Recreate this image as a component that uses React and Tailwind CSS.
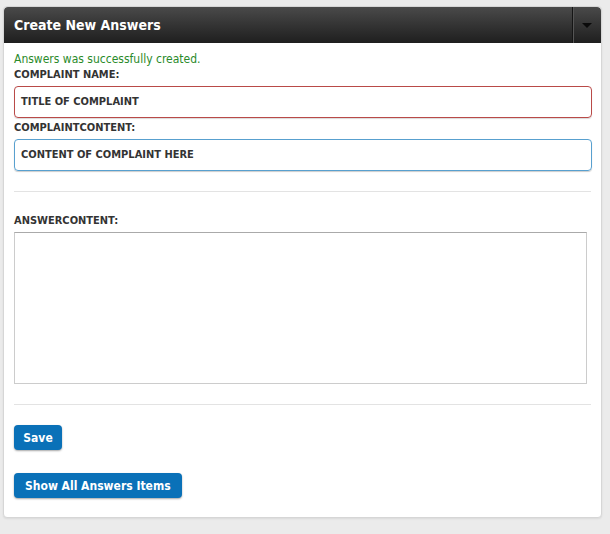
import React from 'react';

const font = { fontFamily: '"DejaVu Sans Condensed", "DejaVu Sans", Verdana, sans-serif' };

const Label = ({ children, className = '' }) => (
  <label className={`block text-[11px] font-bold leading-[13px] text-[#333] ${className}`}>{children}</label>
);

export default function App() {
  return (
    <div className="min-h-[534px] w-[610px] bg-[#ebebeb] pt-[6px] pl-[3px] pr-[8px]" style={font}>
      <div className="w-[599px] h-[512px] rounded-[4px] border border-[#d6d6d6] bg-white shadow-[0_1px_2px_rgba(0,0,0,0.08)] overflow-hidden">
        {/* header */}
        <div className="flex h-[36px] items-stretch bg-gradient-to-b from-[#4a4a4a] to-[#1f1f1f] rounded-t-[4px]">
          <h2 className="flex-1 flex items-center pl-[10px] text-[14px] font-bold text-white">Create New Answers</h2>
          <div className="w-[29px] flex items-center justify-center border-l border-[#151515] shadow-[inset_1px_0_0_#555]">
            <span className="block w-0 h-0 border-l-[5px] border-r-[5px] border-t-[5px] border-l-transparent border-r-transparent border-t-[#0a0a0a]" />
          </div>
        </div>

        <div className="px-[10px] pt-[9px]">
          <p className="text-[12px] leading-[14px] text-[#2a8a2a]">Answers was successfully created.</p>
          <Label className="mt-[2px]">COMPLAINT NAME:</Label>
          <div className="mt-[5px] h-[32px] w-[578px] rounded-[4px] border border-[#b94a48] shadow-[0_1px_1px_rgba(0,0,0,0.15)] flex items-center px-[6px] text-[11px] font-bold text-[#333]">
            TITLE OF COMPLAINT
          </div>
          <Label className="mt-[3px]">COMPLAINTCONTENT:</Label>
          <div className="mt-[5px] h-[32px] w-[578px] rounded-[4px] border border-[#58a0cf] shadow-[0_1px_1px_rgba(0,0,0,0.2)] flex items-center px-[6px] text-[11px] font-bold text-[#333]">
            CONTENT OF COMPLAINT HERE
          </div>

          <div className="mt-[20px] h-px w-[577px] bg-[#e3e3e3]" />

          <Label className="mt-[22px]">ANSWERCONTENT:</Label>
          <div className="mt-[5px] h-[152px] w-[573px] border border-[#cccccc] border-t-[#aaaaaa]" />

          <div className="mt-[20px] h-px w-[577px] bg-[#e3e3e3]" />

          <button className="mt-[20px] block h-[25px] w-[48px] rounded-[4px] bg-[#0a71b8] text-[12px] font-bold text-white shadow-[0_1px_2px_rgba(0,0,0,0.35)]">Save</button>
          <button className="mt-[23px] block h-[25px] px-[11px] rounded-[4px] bg-[#0a71b8] text-[12px] font-bold text-white shadow-[0_1px_2px_rgba(0,0,0,0.35)]">Show All Answers Items</button>
        </div>
      </div>
    </div>
  );
}
